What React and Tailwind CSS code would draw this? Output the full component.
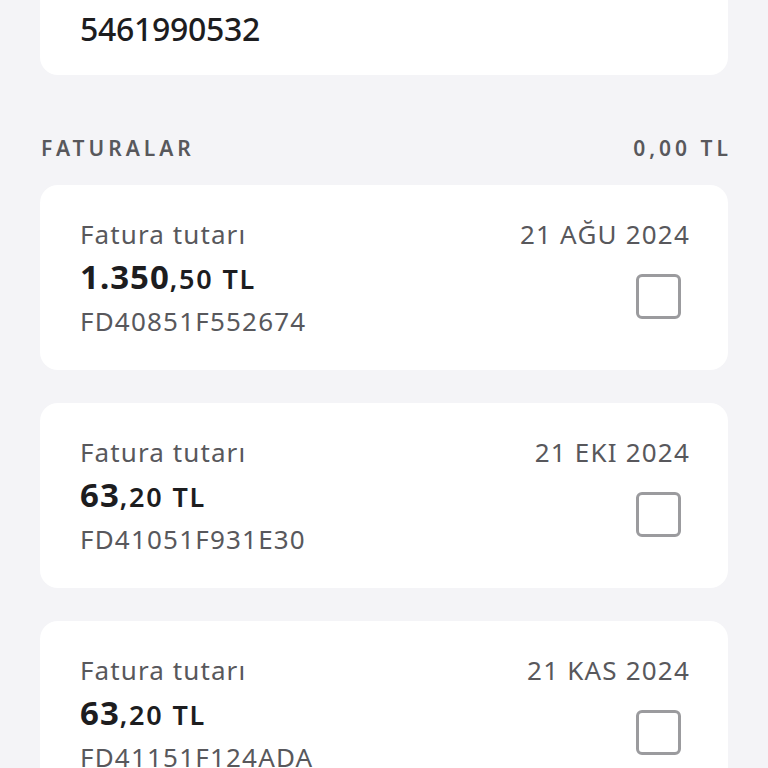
const invoices = [
  { whole: "1.350", cents: ",50 TL", code: "FD40851F552674", date: "21 AĞU 2024" },
  { whole: "63", cents: ",20 TL", code: "FD41051F931E30", date: "21 EKI 2024" },
  { whole: "63", cents: ",20 TL", code: "FD41151F124ADA", date: "21 KAS 2024" },
];

const InvoiceCard = ({ item }) => (
  <div className="bg-white rounded-[18px] pl-10 pr-[39px] pt-[31px] pb-[30px] flex justify-between">
    <div className="flex flex-col">
      <div className="h-9 text-[26px] leading-[36px] tracking-[1.1px] text-[#58585c]">Fatura tutarı</div>
      <div className="h-[50px] leading-[50px] text-[#1d1d1f]">
        <span className="text-[33px] font-bold tracking-[1px]">{item.whole}</span>
        <span className="text-[27px] font-semibold tracking-[1.8px]">{item.cents}</span>
      </div>
      <div className="h-[38px] text-[26px] leading-[38px] tracking-[1.2px] text-[#58585c]">{item.code}</div>
    </div>
    <div className="flex flex-col items-end">
      <div className="h-9 -mr-px text-[26px] leading-[36px] tracking-[1.2px] text-[#58585c]">{item.date}</div>
      <div className="mt-[22px] mr-2 w-[45px] h-[45px] rounded-[6px] border-[3px] border-[#9b9b9e] bg-white" />
    </div>
  </div>
);

export default function App() {
  return (
    <div
      className="min-h-[768px] bg-[#f4f4f7] px-10 overflow-hidden"
      style={{ fontFamily: "'Noto Sans', Lato, sans-serif" }}
    >
      {/* Subscriber card, top cut by the viewport */}
      <div className="-mt-10 bg-white rounded-[18px] pl-10 pt-[49px] pb-[26px]">
        <div className="h-10 text-[32px] leading-[40px] font-medium tracking-[-0.3px] text-[#1d1d1f]">5461990532</div>
      </div>

      {/* Section header */}
      <div className="mt-[58px] h-[30px] flex justify-between items-center text-[21px] leading-[30px] font-semibold tracking-[4px] text-[#58585c]">
        <span className="pl-px">FATURALAR</span>
        <span className="-mr-1">0,00 TL</span>
      </div>

      <div className="mt-[22px] flex flex-col gap-[33px]">
        {invoices.map((item, idx) => (
          <InvoiceCard key={idx} item={item} />
        ))}
      </div>
    </div>
  );
}
